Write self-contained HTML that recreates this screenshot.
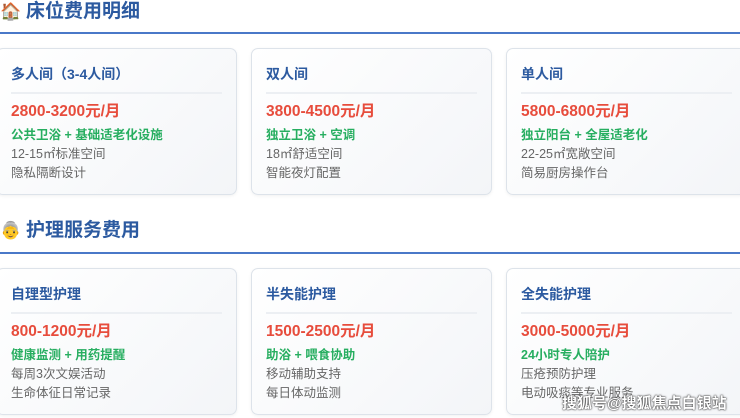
<!DOCTYPE html>
<html><head><meta charset="utf-8"><style>
*{margin:0;padding:0;box-sizing:border-box}
body{width:740px;height:418px;overflow:hidden;background:#fff;font-family:"Liberation Sans","Noto Sans CJK SC",sans-serif;position:relative}
.h{position:absolute;left:0;width:740px;height:2px;background:#4a78c8}
.t{position:absolute;left:26px;font-size:19px;font-weight:bold;color:#2c5aa0;line-height:24px}
.ic{position:absolute;left:0;font-size:17px;line-height:20px}
.c{position:absolute;width:241px;height:147px;border:1px solid #dde3ea;border-radius:7px;background:linear-gradient(135deg,#fff,#f3f5f8);box-shadow:0 1px 3px rgba(0,0,0,.06);padding:0 14px}
.c h3{font-size:14px;color:#2c5aa0;margin-top:15px;line-height:20px;padding-bottom:8px;border-bottom:2px solid #eceff3}
.p{font-size:15.5px;font-weight:bold;color:#e74c3c;margin-top:8px;line-height:20px}
.g{font-size:12.5px;font-weight:bold;color:#27ae60;margin-top:4px;line-height:19px}
.s{font-size:12.5px;color:#666;line-height:19px}
.wm{position:absolute;left:562px;top:392px;font-size:15px;color:#fff;font-weight:bold;text-shadow:0 0 2px #333,0 0 1px #000}
</style></head><body>
<div class="ic" style="top:2px">🏠</div>
<div class="t" style="top:0px">床位费用明细</div>
<div class="h" style="top:32px"></div>
<div class="c" style="left:-4px;top:48px"><h3>多人间（3-4人间）</h3><div class="p">2800-3200元/月</div><div class="g">公共卫浴 + 基础适老化设施</div><div class="s">12-15㎡标准空间</div><div class="s">隐私隔断设计</div></div>
<div class="c" style="left:251px;top:48px"><h3>双人间</h3><div class="p">3800-4500元/月</div><div class="g">独立卫浴 + 空调</div><div class="s">18㎡舒适空间</div><div class="s">智能夜灯配置</div></div>
<div class="c" style="left:506px;top:48px"><h3>单人间</h3><div class="p">5800-6800元/月</div><div class="g">独立阳台 + 全屋适老化</div><div class="s">22-25㎡宽敞空间</div><div class="s">简易厨房操作台</div></div>
<div class="ic" style="top:221px">👵</div>
<div class="t" style="top:219px">护理服务费用</div>
<div class="h" style="top:252px"></div>
<div class="c" style="left:-4px;top:268px"><h3>自理型护理</h3><div class="p">800-1200元/月</div><div class="g">健康监测 + 用药提醒</div><div class="s">每周3次文娱活动</div><div class="s">生命体征日常记录</div></div>
<div class="c" style="left:251px;top:268px"><h3>半失能护理</h3><div class="p">1500-2500元/月</div><div class="g">助浴 + 喂食协助</div><div class="s">移动辅助支持</div><div class="s">每日体动监测</div></div>
<div class="c" style="left:506px;top:268px"><h3>全失能护理</h3><div class="p">3000-5000元/月</div><div class="g">24小时专人陪护</div><div class="s">压疮预防护理</div><div class="s">电动吸痰等专业服务</div></div>
<div class="wm">搜狐号@搜狐焦点白银站</div>
</body></html>
